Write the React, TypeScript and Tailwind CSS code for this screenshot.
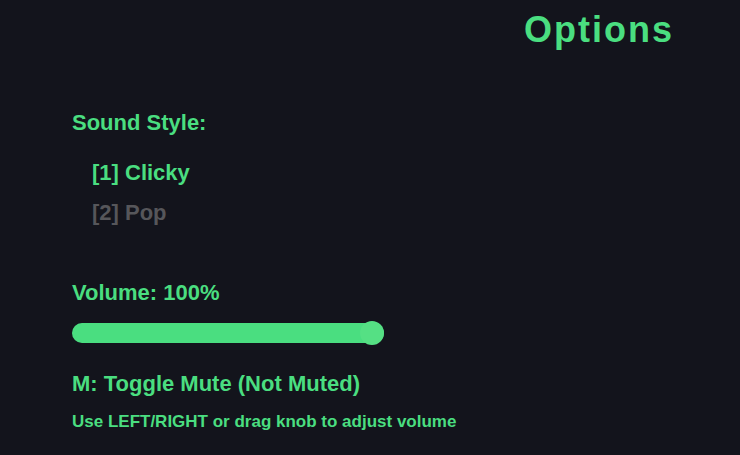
export default function App() {
  const volume = 100

  return (
    <div
      className="w-[740px] h-[455px] bg-[#13141c] text-[#4ade80] font-bold overflow-hidden"
      style={{ fontFamily: '"Liberation Sans", Arial, sans-serif' }}
    >
      <div className="flex justify-end pr-[66px] pt-[9px]">
        <h1 className="text-[36px] leading-[42px] tracking-[2px]">Options</h1>
      </div>

      <div className="pl-[72px] pt-[60px]">
        <div className="text-[22px] leading-[24px]">Sound Style:</div>

        <div className="pl-[20px] pt-[26px] flex flex-col gap-[16px] text-[22px] leading-[24px]">
          <div>[1] Clicky</div>
          <div className="text-[#56565a]">[2] Pop</div>
        </div>

        <div className="pt-[56px] text-[22px] leading-[24px]">Volume: {volume}%</div>

        <div className="relative mt-[18px] w-[312px] h-[20px] rounded-full bg-[#2a2b33]">
          <div className="h-full rounded-full bg-[#4ade80]" style={{ width: `${volume}%` }} />
          <div className="absolute right-0 top-[-2px] w-[24px] h-[24px] rounded-full bg-[#55e084]" />
        </div>

        <div className="pt-[29px] text-[22px] leading-[24px]">M: Toggle Mute (Not Muted)</div>
        <div className="pt-[16px] text-[17px] leading-[20px]">
          Use LEFT/RIGHT or drag knob to adjust volume
        </div>
      </div>
    </div>
  )
}
